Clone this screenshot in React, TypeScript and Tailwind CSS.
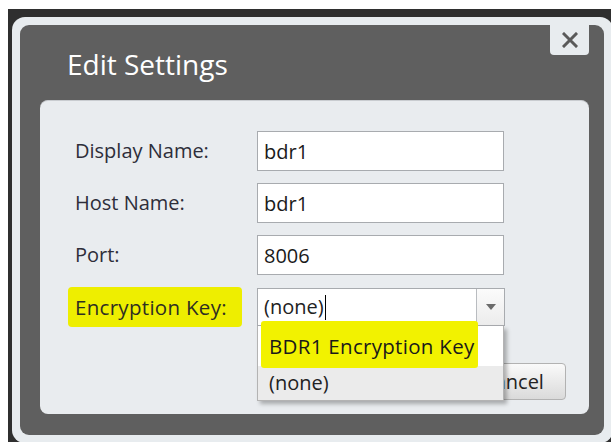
import { useState } from "react";

type Field = { label: string; value: string };

const fields: Field[] = [
  { label: "Display Name:", value: "bdr1" },
  { label: "Host Name:", value: "bdr1" },
  { label: "Port:", value: "8006" },
];

const keyOptions = ["BDR1 Encryption Key", "(none)"];

function CloseIcon() {
  return (
    <svg width="16" height="16" viewBox="0 0 16 16">
      <path d="M2 2 L14 14 M14 2 L2 14" stroke="#5a5a5a" strokeWidth="3" strokeLinecap="square" />
    </svg>
  );
}

function KeySelect() {
  const [value] = useState("(none)");
  return (
    <div className="relative w-[248px]">
      <div className="flex h-[38px] border border-[#a8abaf] bg-white">
        <div className="flex flex-1 items-center pl-[6px] text-[20px] text-[#222]">
          {value}
          <span className="ml-[1px] h-[25px] w-[1.5px] bg-black" />
        </div>
        <div className="flex w-[28px] items-center justify-center border-l border-[#b9bcc0] bg-gradient-to-b from-[#fbfbfb] to-[#ececec]">
          <svg width="10" height="6" viewBox="0 0 10 6">
            <path d="M0 0 L10 0 L5 6 Z" fill="#6b6b6b" />
          </svg>
        </div>
      </div>
      <ul className="absolute left-0 top-[38px] z-10 w-[247px] border border-t-0 border-[#b3b3b3] bg-white shadow-[3px_3px_4px_rgba(0,0,0,0.28)]">
        <li className="relative flex h-[40px] items-center bg-white">
          <span className="absolute left-[3px] top-[-5px] h-[47px] w-[217px] rounded-[3px] bg-[#f2f200]" />
          <span className="relative pl-[11px] text-[20.5px] tracking-[0.3px] text-[#1a1a1a]">{keyOptions[0]}</span>
        </li>
        <li className="flex h-[34px] items-center bg-[#ebebeb] pl-[11px] text-[20px] text-[#222]">
          {keyOptions[1]}
        </li>
      </ul>
    </div>
  );
}

export default function App() {
  return (
    <div className="flex h-[442px] w-[611px] overflow-hidden bg-white pl-[8px] pt-[9px] font-['Open_Sans',sans-serif]">
      <div className="flex flex-1 bg-[#2f2f2f] pl-[4px] pt-[8px]">
        <div className="flex h-[426px] w-[601px] shrink-0 rounded-[13px] bg-[#e8ecef] p-[8px] pr-[9px]">
          <div className="flex flex-1 flex-col rounded-[9px] bg-[#5f5f5f] pb-[21px] pl-[20px] pr-[15px]">
            <div className="flex h-[75px] items-start justify-between">
              <h1 className="pl-[27px] pt-[25px] text-[28px] leading-[28px] text-white">Edit Settings</h1>
              <button className="-mt-[1px] flex h-[31px] w-[39px] items-center justify-center rounded-b-[4px] bg-[#e8ecef]">
                <CloseIcon />
              </button>
            </div>
            <div className="flex flex-1 flex-col rounded-[8px] border-t border-[#c9ccd0] bg-[#e9ecef] pl-[35px] pr-[23px] pt-[30px]">
              <div className="flex flex-col gap-[12px]">
                {fields.map((f) => (
                  <div key={f.label} className="flex items-center">
                    <label className="w-[182px] text-[20px] leading-[40px] text-[#2e2e3a]">{f.label}</label>
                    <input
                      readOnly
                      value={f.value}
                      className="h-[40px] w-[247px] border border-[#a8abaf] bg-white px-[6px] text-[20px] text-[#1a1a1a] outline-none"
                    />
                  </div>
                ))}
                <div className="flex items-center">
                  <div className="w-[182px]">
                    <span className="-ml-[7px] inline-block w-[174px] rounded-[4px] bg-[#eeee00] py-[1px] pl-[7px] text-[20.5px] leading-[38px] tracking-[0.3px] text-[#2e2e22]">
                      Encryption Key:
                    </span>
                  </div>
                  <KeySelect />
                </div>
              </div>
              <div className="mt-[36px] flex justify-end gap-[10px]">
                <button className="h-[37px] w-[90px] rounded-[4px] border border-[#b2b2b2] bg-gradient-to-b from-[#fafafa] to-[#dadada] text-[20px] text-[#222]">
                  Save
                </button>
                <button className="h-[37px] w-[106px] rounded-[4px] border border-[#b2b2b2] bg-gradient-to-b from-[#fafafa] to-[#dadada] text-[20px] text-[#222]">
                  Cancel
                </button>
              </div>
            </div>
          </div>
        </div>
      </div>
    </div>
  );
}
